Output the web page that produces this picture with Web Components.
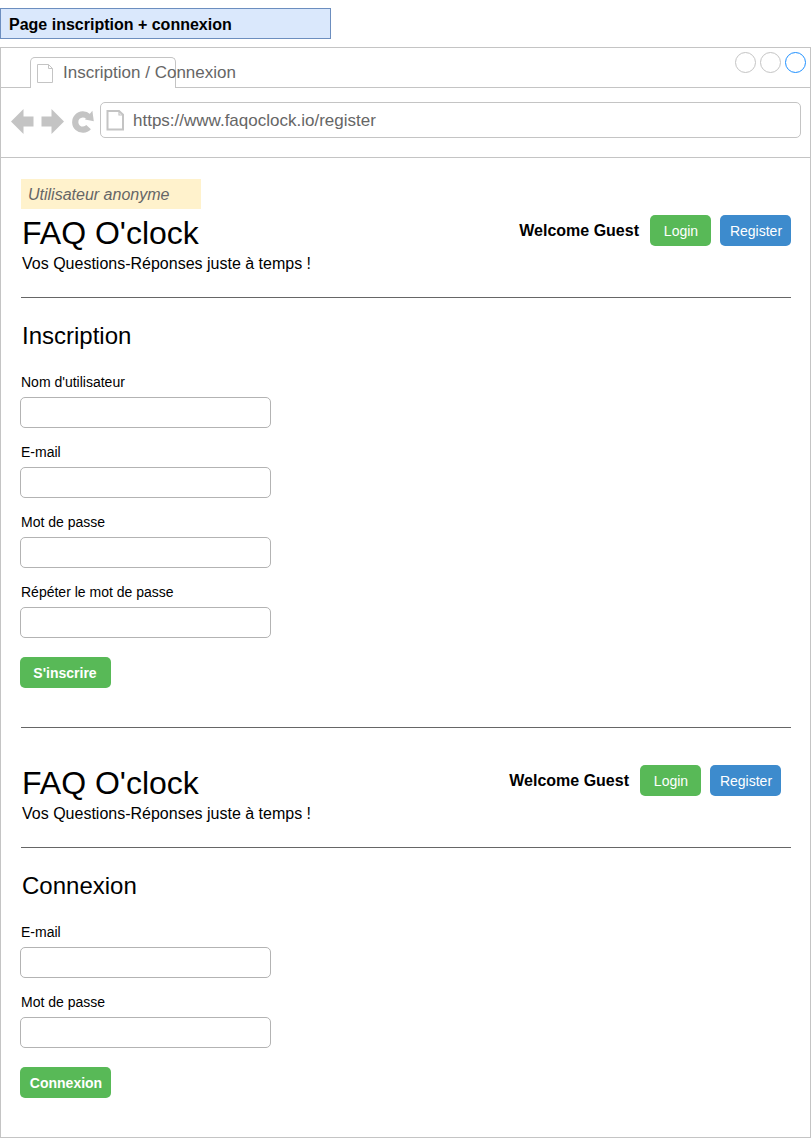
<!DOCTYPE html>
<html lang="fr">
<head>
<meta charset="utf-8">
<title>Page inscription + connexion</title>
<style>
body{margin:0;padding-top:8px;background:#fff;color:#000;font-family:"Liberation Sans",Arial,sans-serif;font-size:16px;display:flex;flex-direction:column;gap:8px;height:1130px}
</style>
</head>
<body>
<page-note>Page inscription + connexion</page-note>
<browser-window tab-title="Inscription / Connexion" url="https://www.faqoclock.io/register">
  <user-state>Utilisateur anonyme</user-state>
  <site-header></site-header>
  <user-form heading="Inscription" action-label="S'inscrire" style="--nudge:-2px"></user-form>
  <section-rule></section-rule>
  <site-header style="--top:31px;--right:10px"></site-header>
  <user-form heading="Connexion" action-label="Connexion"></user-form>
</browser-window>
<script>
function define(name, render) {
  customElements.define(name, class extends HTMLElement {
    constructor() {
      super();
      this.attachShadow({ mode: 'open' });
    }
    connectedCallback() {
      this.shadowRoot.innerHTML = render(this);
    }
  });
}

define('page-note', () => `
<style>
:host{display:block;box-sizing:border-box;flex:none;width:331px;height:31px;border:1px solid #6c8ebf;background:#dae8fc;padding-left:8px;font-weight:bold;line-height:31px}
</style><slot></slot>`);

define('page-icon', el => `
<style>:host{display:block;flex:none}svg{display:block}</style>
<svg width="19" height="22" viewBox="0 0 19 22" fill="none" stroke="#c4c4c4" stroke-width="${el.getAttribute('weight')}">
${el.getAttribute('weight') === '1'
  ? '<path d="M1.5 1.5H12.5L16.5 5.5V19.5H1.5ZM12.5 1.5V5.5H16.5"/>'
  : '<path d="M1.5 2H13L17 5.8V20.5H1.5Z"/><path d="M13 2.5V6H17" stroke-width="1.2"/>'}
</svg>`);

define('browser-window', el => `
<style>
:host{display:flex;flex-direction:column;flex:1;box-sizing:border-box;border:1px solid #c4c4c4}
.tabs{display:flex;box-sizing:border-box;height:40px;border-bottom:1px solid #c4c4c4;justify-content:space-between;padding-left:29px;flex:none}
.tab{box-sizing:border-box;width:146px;height:31px;margin-top:9px;border:1px solid #c4c4c4;border-bottom:0;border-radius:5px 5px 0 0;background:#fff;display:flex;gap:8px;padding:5px 0 0 5px;color:#666;font-size:17px;line-height:20px;white-space:nowrap}
.dots{display:flex;gap:4px;padding:4px 4px 0 0}
.dots i{box-sizing:border-box;width:21px;height:21px;border:1px solid #c4c4c4;border-radius:50%}
.dots i:last-child{border-color:#1e90ff}
.bar{display:flex;box-sizing:border-box;height:70px;border-bottom:1px solid #c4c4c4;padding:14px 9px 0 9px;flex:none}
.nav{display:block;width:90px;height:40px;flex:none}
.url{box-sizing:border-box;flex:1;height:36px;border:1px solid #c4c4c4;border-radius:5px;display:flex;gap:8px;padding:6px 0 0 5px;color:#666;font-size:17px;line-height:23px}
main{padding:21px 19px 0}
</style>
<div class="tabs">
  <div class="tab"><page-icon weight="1"></page-icon><span>${el.getAttribute('tab-title')}</span></div>
  <div class="dots"><i></i><i></i><i></i></div>
</div>
<div class="bar">
  <svg class="nav" viewBox="0 0 90 40" fill="#c4c4c4">
    <path d="M1 19.5 13.5 7V14.5H23.5V24.5H13.5V32ZM54 19.5 41.5 7V14.5H31.5V24.5H41.5V32Z"/>
    <path d="M78.6 25.2A7.7 7.7 0 1 1 78.2 14.4" fill="none" stroke="#c4c4c4" stroke-width="6.2"/>
    <path d="M82.4 8.8 83.8 19.2 75 17.6Z"/>
  </svg>
  <div class="url"><page-icon weight="2"></page-icon><span>${el.getAttribute('url')}</span></div>
</div>
<main><slot></slot></main>`);

define('user-state', () => `
<style>
:host{display:block;box-sizing:border-box;width:180px;height:30px;margin-left:1px;background:#fff2cc;color:#666;font-style:italic;line-height:31px;padding-left:7px}
</style><slot></slot>`);

define('section-rule', () => `
<style>:host{display:block;height:1px;margin:0 0 0 1px;background:#666}</style>`);

define('ui-button', () => `
<style>
:host{display:flex;box-sizing:border-box;align-items:center;justify-content:center;height:31px;border-radius:5px;background:var(--fill,#58b957);color:#fff;font-size:14px;padding-top:1px}
span{margin-left:calc(1px + var(--nudge,0px))}
</style><span><slot></slot></span>`);

define('site-header', () => `
<style>
:host{display:flex;box-sizing:border-box;height:calc(89px + var(--top,0px));padding-top:var(--top,0);justify-content:space-between;border-bottom:1px solid #666;margin-left:1px}
h1{margin:5px 0 0 1px;font-size:32px;line-height:38px;font-weight:normal}
p{margin:2px 0 0 1px;line-height:20px}
.user{display:flex;padding:6px var(--right,0) 0 0;font-weight:bold;line-height:31px}
ui-button{font-weight:normal}
.login{width:61px;margin:0 9px 0 11px}
.register{width:71px;--fill:#3d8bcd}
</style>
<div><h1>FAQ O'clock</h1><p>Vos Questions-Réponses juste à temps !</p></div>
<div class="user"><span>Welcome Guest</span><ui-button class="login">Login</ui-button><ui-button class="register">Register</ui-button></div>`);

define('form-field', () => `
<style>
:host{display:block;font-size:14px;margin-bottom:9px}
label{display:block;height:30px;line-height:30px;padding-left:1px}
input{display:block;box-sizing:border-box;width:251px;height:31px;margin:0;border:1px solid #b3b3b3;border-radius:5px;background:#fff}
</style><label><slot></slot></label><input>`);

const FIELDS = {
  Inscription: ["Nom d'utilisateur", 'E-mail', 'Mot de passe', 'Répéter le mot de passe'],
  Connexion: ['E-mail', 'Mot de passe']
};

define('user-form', el => `
<style>
:host{display:block;padding:23px 0 39px}
h2{margin:0 0 16px 2px;font-size:24px;line-height:30px;font-weight:normal}
ui-button{width:91px;margin-top:19px;font-weight:bold}
</style>
<h2>${el.getAttribute('heading')}</h2>
${FIELDS[el.getAttribute('heading')].map(name => `<form-field>${name}</form-field>`).join('')}
<ui-button>${el.getAttribute('action-label')}</ui-button>`);
</script>
</body>
</html>
